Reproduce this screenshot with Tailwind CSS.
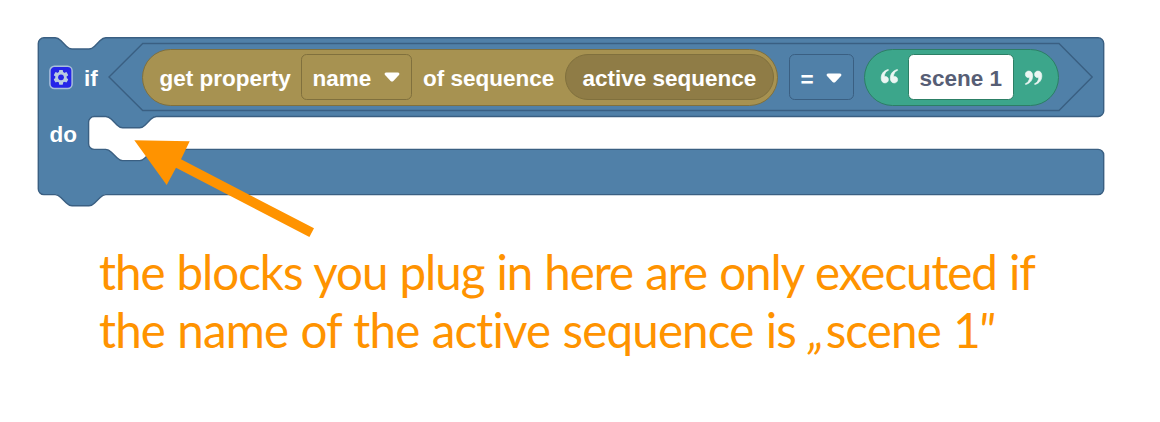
<!DOCTYPE html>
<html lang="en">
<head>
<meta charset="utf-8">
<title>Block explanation</title>
<script src="https://cdn.jsdelivr.net/npm/@tailwindcss/browser@4"></script>
</head>
<body class="bg-white">
<main class="relative h-[422px] w-[1160px] overflow-hidden bg-white">
  <svg class="absolute inset-0" width="1160" height="422" fill="none">
    <path fill="#5080a8" stroke="#3a5f82" stroke-width="1.4" d="M38.3 43.4a5.6 5.6 0 0 1 5.6-5.6H55.2c2.8 0 4.2 1.4 5.6 2.8l5.6 5.6c1.4 1.4 2.8 2.8 5.6 2.8h17c2.8 0 4.2-1.4 5.6-2.8l5.6-5.6c1.4-1.4 2.8-2.8 5.6-2.8H1098.1a5.6 5.6 0 0 1 5.6 5.6V110.9a5.6 5.6 0 0 1-5.6 5.6H156.4c-2.8 0-4.2 1.4-5.6 2.8l-5.6 5.6c-1.4 1.4-2.8 2.8-5.6 2.8h-17c-2.8 0-4.2-1.4-5.6-2.8l-5.6-5.6c-1.4-1.4-2.8-2.8-5.6-2.8H94.2a5.6 5.6 0 0 0-5.6 5.6V143.8a5.6 5.6 0 0 0 5.6 5.6H105.8c2.8 0 4.2 1.4 5.6 2.8l5.6 5.6c1.4 1.4 2.8 2.8 5.6 2.8h17c2.8 0 4.2-1.4 5.6-2.8l5.6-5.6c1.4-1.4 2.8-2.8 5.6-2.8H1098.1a5.6 5.6 0 0 1 5.6 5.6V189a5.6 5.6 0 0 1-5.6 5.6H105.8c-2.8 0-4.2 1.4-5.6 2.8l-5.6 5.6c-1.4 1.4-2.8 2.8-5.6 2.8h-17c-2.8 0-4.2-1.4-5.6-2.8l-5.6-5.6c-1.4-1.4-2.8-2.8-5.6-2.8H43.9a5.6 5.6 0 0 1-5.6-5.6Z"/>
    <path stroke="#3a5f82" stroke-width="1.4" d="M142.7 43.5H1059l33.2 33.5-33.2 33.5H142.7L109 77Z"/>
  </svg>

  <div class="relative flex h-[117px] items-start whitespace-nowrap pl-[49px] pt-[48px] font-['Liberation_Sans',sans-serif] text-[22.5px] font-bold text-white">
    <svg class="mt-[17px] shrink-0" width="25" height="25" viewBox="0 0 25 25">
      <rect x=".9" y="1.3" width="22.2" height="22.2" rx="4.5" fill="#2525e8" stroke="#a9bfdb" stroke-width="1.5"/>
      <g transform="translate(12 12.3)"><g fill="#b9cbe0"><circle r="5.7"/><rect x="-2" y="-7.4" width="4" height="14.8" rx=".8"/><rect x="-2" y="-7.4" width="4" height="14.8" rx=".8" transform="rotate(60)"/><rect x="-2" y="-7.4" width="4" height="14.8" rx=".8" transform="rotate(120)"/></g><circle r="2.9" fill="#2525e8"/></g>
    </svg>
    <span class="ml-[10px] mt-[18px] w-[15px] leading-[26px]">if</span>
    <div class="ml-[43px] mt-[0.5px] flex h-[57.4px] w-[636px] shrink-0 items-center rounded-full border-[1.4px] border-[#80703d] bg-[#a79251] pl-[16.5px]">
      <span class="w-[141.5px] shrink-0 pt-[3px]">get property</span>
      <div class="flex h-[46px] w-[111px] shrink-0 items-center rounded-[5.6px] border-[1.4px] border-[#80703d] pl-[10.5px] pt-[3px]">
        <span class="w-[70px]">name</span>
        <svg class="-mt-[3px]" width="18" height="12" viewBox="0 0 18 12"><path fill="#fff" d="M3.4 1.4H14.6C16.7 1.4 16.8 3.1 15.7 4.3L10.4 9.9Q9 11.3 7.6 9.9L2.3 4.3C1.2 3.1 1.3 1.4 3.4 1.4Z"/></svg>
      </div>
      <span class="ml-[11px] w-[142px] shrink-0 pt-[3px]">of sequence</span>
      <div class="flex h-[46px] w-[208.5px] shrink-0 items-center rounded-full border-[1.4px] border-[#80703d] bg-[#8f7c46] pl-[16.5px] pt-[3px]">active sequence</div>
    </div>
    <div class="ml-[11px] mt-[6px] flex h-[46px] w-[65px] shrink-0 items-center rounded-[5.6px] border-[1.4px] border-[#3a5f82] pl-[10.5px] pt-[4px]">
      <span class="w-[24px] pt-[1px]">=</span>
      <svg class="-mt-[3px]" width="18" height="12" viewBox="0 0 18 12"><path fill="#fff" d="M3.4 1.4H14.6C16.7 1.4 16.8 3.1 15.7 4.3L10.4 9.9Q9 11.3 7.6 9.9L2.3 4.3C1.2 3.1 1.3 1.4 3.4 1.4Z"/></svg>
    </div>
    <div class="ml-[10px] mt-[0.5px] flex h-[57.4px] w-[195px] shrink-0 items-center rounded-full border-[1.4px] border-[#2c7f65] bg-[#3ca68b] pl-[15px]">
      <svg class="shrink-0" width="20" height="18" viewBox="0 0 20 18"><g id="quote" fill="#ecf6f3" stroke="#ecf6f3" stroke-width=".7"><path d="M8.2 1.6C3.6 2.5 1.2 6 1.2 10.2c0 3 1.5 4.7 3.8 4.7 2 0 3.4-1.3 3.4-3.3 0-1.9-1.3-3.1-3.1-3.1-.4 0-.8.1-1.1.2C4.4 5.6 5.7 3.3 8.5 2.2Z"/><path transform="translate(9.2 0)" d="M8.2 1.6C3.6 2.5 1.2 6 1.2 10.2c0 3 1.5 4.7 3.8 4.7 2 0 3.4-1.3 3.4-3.3 0-1.9-1.3-3.1-3.1-3.1-.4 0-.8.1-1.1.2C4.4 5.6 5.7 3.3 8.5 2.2Z"/></g></svg>
      <div class="ml-[8px] flex h-[46px] w-[106px] shrink-0 items-center rounded-[5.6px] border-[1.4px] border-[#2c7f65] bg-white pl-[10.5px] pt-[3px] text-[#575e75]">scene 1</div>
      <svg class="ml-[9px] shrink-0 rotate-180" width="20" height="18" viewBox="0 0 20 18"><use href="#quote"/></svg>
    </div>
  </div>
  <div class="relative h-[85px] pl-[49.5px] pt-[5px] font-['Liberation_Sans',sans-serif] text-[22.5px] font-bold leading-[26px] text-white">do</div>

  <svg class="absolute inset-0" width="1160" height="422"><path fill="#ff9300" d="M134.3 140.2L189.7 141.2 181 159.2 314 228.3 309.4 237 176 167.8 166.7 185Z"/></svg>

  <p class="relative mt-[41px] whitespace-nowrap pl-[99px] font-[Lato,sans-serif] text-[47.5px] leading-[58px] text-[#ff9300]"><span class="tracking-[-1.05px] [word-spacing:1px]">the blocks you plug in here are only executed if</span><br><span class="tracking-[-0.85px] [word-spacing:1px]">the name of the active sequence is <i class="mr-[2px]">„</i>scene 1<i class="-ml-[2px]">"</i></span></p>
</main>
</body>
</html>
